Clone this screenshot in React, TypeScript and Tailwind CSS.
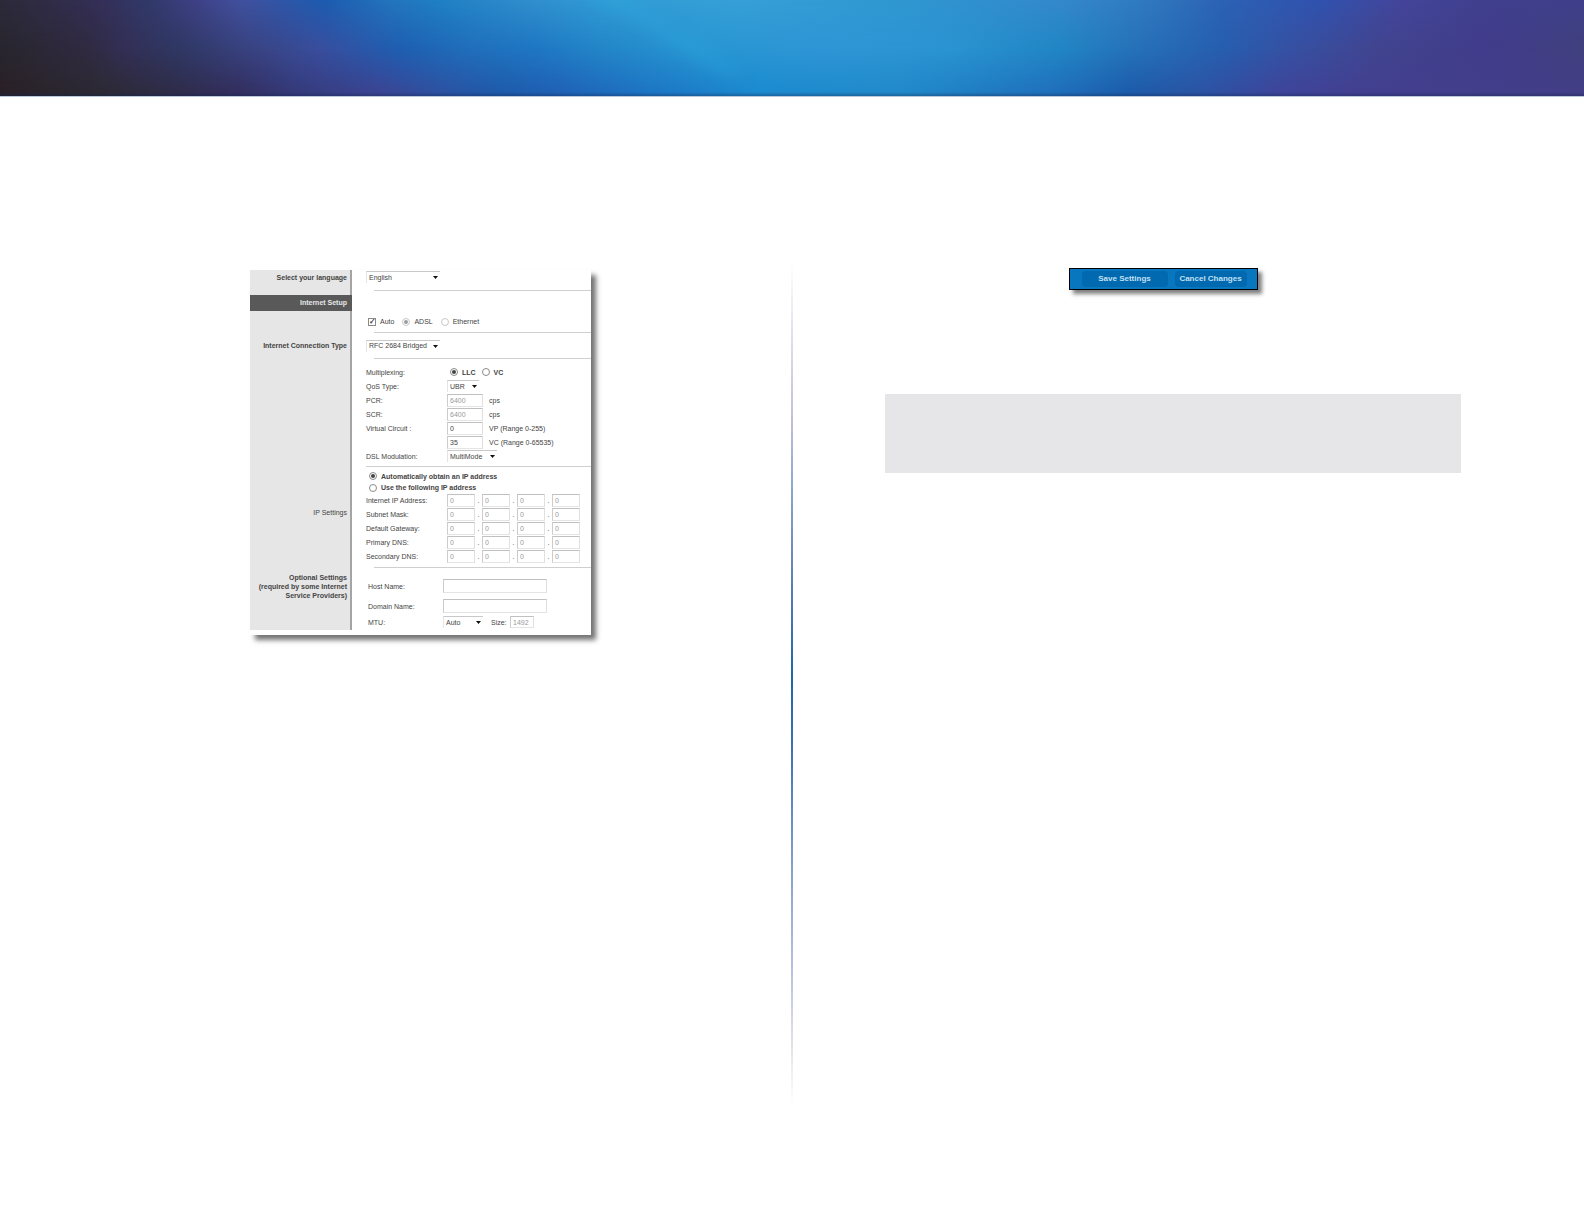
import type { ReactNode } from 'react';
import clsx from 'clsx';

interface SectionProps {
    label?: ReactNode;
    labelClass?: string;
    children: ReactNode;
}

interface FieldProps {
    label: string;
    htmlFor?: string;
    className?: string;
    children: ReactNode;
}

interface SelectProps {
    id: string;
    value: string;
    className: string;
    label?: string;
}

interface TextBoxProps {
    id: string;
    value?: string;
    className: string;
    label?: string;
}

interface ChoiceProps {
    id: string;
    type?: 'radio' | 'checkbox';
    name: string;
    label: string;
    checked?: boolean;
    bold?: boolean;
    muted?: boolean;
}

type Stop = [number, string];

// Banner colours along the top, centre and bottom of the band
const topStops: Stop[] = [
    [0, '#2c2a3a'], [60, '#312c4a'], [100, '#342f58'], [150, '#313a6a'], [190, '#3e3f82'], [240, '#41509e'],
    [325, '#1c5cb0'], [390, '#2374bc'], [440, '#1f80c4'], [530, '#308ecc'], [600, '#309bd4'],
    [740, '#369fd6'], [900, '#2f97d0'], [1060, '#3488cb'], [1150, '#3078be'], [1220, '#2c62b4'],
    [1320, '#3052ae'], [1400, '#44459a'], [1480, '#403f8e'], [1584, '#3e3f8a'],
];
const middleStops: Stop[] = [
    [0, '#28262e'], [90, '#302b42'], [125, '#332f56'], [180, '#2f3864'], [250, '#394382'],
    [320, '#394e9e'], [400, '#1e5fb2'], [470, '#206fbc'], [540, '#1f78c4'], [600, '#2386c8'],
    [700, '#2896d3'], [830, '#2f96d6'], [950, '#2a94d2'], [1060, '#2186c5'], [1130, '#2673ba'],
    [1220, '#265fb0'], [1290, '#3651a3'], [1380, '#41448f'], [1490, '#413c8b'], [1584, '#40407e'],
];
const bottomStops: Stop[] = [
    [0, '#2a2026'], [100, '#2c2a34'], [170, '#2f2c48'], [240, '#332f60'], [300, '#353b7c'],
    [380, '#3b4594'], [440, '#2d52a2'], [500, '#1e5bab'], [560, '#2062b6'], [650, '#1d76c4'],
    [760, '#1c8bcf'], [900, '#218aca'], [1050, '#2071bc'], [1130, '#1c5cab'], [1200, '#2c54a4'],
    [1280, '#3e459a'], [1360, '#433f90'], [1584, '#423e86'],
];

const Gradient = ({ id, stops }: { id: string; stops: Stop[] }) => (
    <linearGradient id={id}>
        {stops.map(([x, color]) => (
            <stop key={x} offset={x / 1584} stopColor={color} />
        ))}
    </linearGradient>
);

const Banner = () => (
    <header className="border-b border-[#b9c6de]">
        <svg className="block h-24 w-full" viewBox="0 0 1584 96" preserveAspectRatio="none" aria-hidden="true">
            <defs>
                <Gradient id="band-top" stops={topStops} />
                <Gradient id="band-middle" stops={middleStops} />
                <Gradient id="band-bottom" stops={bottomStops} />
                <linearGradient id="fade-down" x1="0" y1="0" x2="0" y2="1">
                    <stop offset="0" stopColor="#fff" />
                    <stop offset="0.5" stopColor="#000" />
                </linearGradient>
                <linearGradient id="fade-up" x1="0" y1="0" x2="0" y2="1">
                    <stop offset="0.5" stopColor="#000" />
                    <stop offset="0.95" stopColor="#fff" />
                </linearGradient>
                <linearGradient id="edge" x1="0" y1="0" x2="0" y2="1">
                    <stop offset="0" stopColor="#10204a" stopOpacity="0" />
                    <stop offset="1" stopColor="#10204a" stopOpacity="0.35" />
                </linearGradient>
                <mask id="mask-top"><rect width="1584" height="96" fill="url(#fade-down)" /></mask>
                <mask id="mask-bottom"><rect width="1584" height="96" fill="url(#fade-up)" /></mask>
                <filter id="soften"><feGaussianBlur stdDeviation="7" /></filter>
            </defs>
            <rect width="1584" height="96" fill="url(#band-middle)" />
            <rect width="1584" height="96" fill="url(#band-top)" mask="url(#mask-top)" />
            <rect width="1584" height="96" fill="url(#band-bottom)" mask="url(#mask-bottom)" />
            <path d="M580-10 L620-10 L750 75 L720 75 Z" fill="#2fb0e4" opacity="0.22" filter="url(#soften)" />
            <rect y="92" width="1584" height="4" fill="url(#edge)" />
        </svg>
    </header>
);

const Section = ({ label, labelClass, children }: SectionProps) => (
    <section className="grid grid-cols-[102px_1fr]">
        <div className="border-r-2 border-[#a4a4a4] bg-[#e6e6e6]">
            {label && <h2 className={clsx('text-right leading-[9px]', labelClass)}>{label}</h2>}
        </div>
        <div className="pl-3.5">{children}</div>
    </section>
);

const Rule = ({ className }: { className?: string }) => (
    <hr className={clsx('border-[#cfcfcf]', className)} />
);

const Field = ({ label, htmlFor, className = 'h-3.5 grid-cols-[81px_1fr]', children }: FieldProps) => (
    <div className={clsx('grid items-center', className)}>
        {htmlFor ? <label htmlFor={htmlFor}>{label}</label> : <span>{label}</span>}
        <div className="flex items-center">{children}</div>
    </div>
);

const Select = ({ id, value, className, label }: SelectProps) => (
    <div className={clsx('relative h-3', className)}>
        <select
            id={id}
            aria-label={label}
            className="block h-full w-full appearance-none border-t border-l border-t-[#c8c8c8] border-l-[#e4e4e4] bg-white pl-0.5 leading-[10px] outline-none"
        >
            <option>{value}</option>
        </select>
        <svg className="pointer-events-none absolute top-[5px] right-0.5 h-[3px] w-[5px]" viewBox="0 0 5 3" aria-hidden="true">
            <path d="M0 0h5L2.5 3z" fill="#111" />
        </svg>
    </div>
);

const TextBox = ({ id, value = '', className, label }: TextBoxProps) => (
    <input
        id={id}
        type="text"
        aria-label={label}
        defaultValue={value}
        className={clsx(
            'border border-t-[#c0c0c0] border-r-[#e0e0e0] border-b-[#e4e4e4] border-l-[#cccccc] bg-white pl-0.5 outline-none',
            className
        )}
    />
);

const Choice = ({ id, type = 'radio', name, label, checked, bold, muted }: ChoiceProps) => (
    <label htmlFor={id} className={clsx('flex items-center gap-1', bold && 'font-bold')}>
        <input
            id={id}
            type={type}
            name={name}
            defaultChecked={checked}
            className={clsx(
                'grid size-2 shrink-0 appearance-none place-content-center border bg-white',
                type === 'radio'
                    ? 'rounded-full before:size-1 before:rounded-full'
                    : 'before:text-[8px] before:leading-[8px] before:font-bold checked:before:content-["✓"]',
                type === 'radio' && !muted && 'checked:before:bg-[#444]',
                muted ? 'border-[#c8c8c8] checked:before:bg-[#9c9c9c]' : 'border-[#8a8a8a]'
            )}
        />
        {label}
    </label>
);

const addressRows = [
    { id: 'internet-ip', label: 'Internet IP Address:' },
    { id: 'subnet-mask', label: 'Subnet Mask:' },
    { id: 'gateway', label: 'Default Gateway:' },
    { id: 'primary-dns', label: 'Primary DNS:' },
    { id: 'secondary-dns', label: 'Secondary DNS:' },
];

const AddressField = ({ id, label }: { id: string; label: string }) => (
    <Field label={label} htmlFor={`${id}-1`}>
        {[1, 2, 3, 4].map((part) => (
            <div key={part} className="flex items-center">
                {part > 1 && <span className="w-[7px] text-center">.</span>}
                <TextBox id={`${id}-${part}`} label={`${label} ${part}`} value="0" className="h-[13px] w-7 text-[#9a9a9a]" />
            </div>
        ))}
    </Field>
);

const SetupForm = () => (
    <form className="w-[341px] bg-white pb-[5px] text-[7px] leading-[9px] text-[#444] shadow-[5px_5px_5px_rgba(0,0,0,0.55)]">
        <Section label="Select your language" labelClass="pt-[3px] pr-[3px] font-bold">
            <div className="flex h-5 items-start pt-px">
                <Select id="language" label="Select your language" value="English" className="w-[74px]" />
            </div>
            <Rule className="mb-1 ml-2" />
        </Section>

        <Section label="Internet Setup" labelClass="-mr-0.5 bg-[#595959] py-[3px] pr-[5px] leading-[10px] font-bold text-[#e8e8e8]">
            <div className="flex h-[37px] items-center gap-2 pt-4 pl-0.5">
                <Choice id="auto" type="checkbox" name="auto" label="Auto" checked />
                <Choice id="adsl" name="link" label="ADSL" checked muted />
                <Choice id="ethernet" name="link" label="Ethernet" muted />
            </div>
            <Rule className="ml-2" />
        </Section>

        <Section label="Internet Connection Type" labelClass="pt-2 pr-[3px] font-bold">
            <div className="flex h-[25px] items-center">
                <Select id="connection" label="Internet Connection Type" value="RFC 2684 Bridged" className="w-[74px]" />
            </div>
            <Rule className="ml-2" />
        </Section>

        <Section>
            <div className="pt-1.5 pb-[3px]">
                <Field label="Multiplexing:">
                    <div className="flex gap-1.5 pl-[3px]">
                        <Choice id="llc" name="mux" label="LLC" checked bold />
                        <Choice id="vc" name="mux" label="VC" bold />
                    </div>
                </Field>
                <Field label="QoS Type:" htmlFor="qos">
                    <Select id="qos" value="UBR" className="w-8" />
                </Field>
                <Field label="PCR:" htmlFor="pcr">
                    <TextBox id="pcr" value="6400" className="mr-1.5 h-[13px] w-9 text-[#9a9a9a]" />
                    cps
                </Field>
                <Field label="SCR:" htmlFor="scr">
                    <TextBox id="scr" value="6400" className="mr-1.5 h-[13px] w-9 text-[#9a9a9a]" />
                    cps
                </Field>
                <Field label="Virtual Circuit :" htmlFor="vpi">
                    <TextBox id="vpi" value="0" className="mr-1.5 h-[13px] w-9" />
                    VP (Range 0-255)
                </Field>
                <Field label="">
                    <TextBox id="vci" label="VC" value="35" className="mr-1.5 h-[13px] w-9" />
                    VC (Range 0-65535)
                </Field>
                <Field label="DSL Modulation:" htmlFor="modulation">
                    <Select id="modulation" value="MultiMode" className="w-[50px]" />
                </Field>
            </div>
            <Rule />
        </Section>

        <Section label="IP Settings" labelClass="pt-[41px] pr-[3px]">
            <div className="pt-[3px] pb-1">
                <div className="flex h-3 items-center pl-[3px]">
                    <Choice id="ip-auto" name="ip" label="Automatically obtain an IP address" checked bold />
                </div>
                <div className="flex h-[11px] items-center pl-[3px]">
                    <Choice id="ip-manual" name="ip" label="Use the following IP address" bold />
                </div>
                {addressRows.map((row) => (
                    <AddressField key={row.id} {...row} />
                ))}
            </div>
            <Rule className="ml-2" />
        </Section>

        <Section
            label={<>Optional Settings<br />(required by some Internet<br />Service Providers)</>}
            labelClass="pt-[5px] pr-[3px] font-bold"
        >
            <div className="pt-2 pb-0.5 pl-0.5">
                <Field label="Host Name:" htmlFor="host" className="h-5 grid-cols-[75px_1fr]">
                    <TextBox id="host" className="h-3.5 w-[104px]" />
                </Field>
                <Field label="Domain Name:" htmlFor="domain" className="h-5 grid-cols-[75px_1fr]">
                    <TextBox id="domain" className="h-3.5 w-[104px]" />
                </Field>
                <Field label="MTU:" htmlFor="mtu" className="h-3 grid-cols-[75px_1fr]">
                    <Select id="mtu" value="Auto" className="w-10" />
                    <label htmlFor="mtu-size" className="w-[27px] pl-2">Size:</label>
                    <TextBox id="mtu-size" value="1492" className="h-3 w-6 text-[#9a9a9a]" />
                </Field>
            </div>
        </Section>
    </form>
);

const ActionBar = () => (
    <div className="flex h-[22px] w-[189px] items-center justify-between border border-black bg-[#0877bf] pr-2.5 pl-3 text-[8px] leading-[10px] font-bold text-[#c4e0f2] shadow-[4px_4px_4px_rgba(0,0,0,0.5)]">
        <button type="button" className="h-4 w-[86px] rounded-sm bg-[#0069b0]">Save Settings</button>
        <button type="button" className="h-4 w-[72px] rounded-sm bg-[#0069b0]">Cancel Changes</button>
    </div>
);

export default function App() {
    return (
        <div className="min-h-screen bg-white font-['Liberation_Sans',Arial,sans-serif]">
            <Banner />
            <main className="grid grid-cols-[1fr_2px_1fr] pt-[165px] pb-[118px]">
                <div className="flex items-start justify-center pt-2 pr-[73px] pl-[123px]">
                    <SetupForm />
                </div>
                <div className="h-[844px] bg-[linear-gradient(#fff,#d3d1df_13%,#c3bcd9_19%,#8fa9d0_26%,#5b7fb4_38%,#1f67a8_49%,#3a70b0_57%,#7b9cca_70%,#bfc3e0_85%,#e3e3e6_93%,#fff)]" />
                <div className="pt-1.5 pr-[123px] pl-[92px]">
                    <div className="flex justify-center pr-5">
                        <ActionBar />
                    </div>
                    <div className="mt-[104px] h-[79px] bg-[#e6e6e8]" />
                </div>
            </main>
        </div>
    );
}
